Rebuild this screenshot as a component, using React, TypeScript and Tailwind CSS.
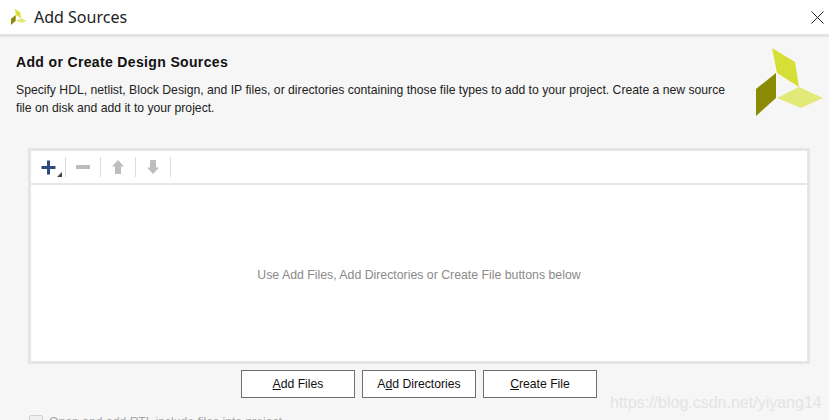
function Logo({ className }: { className: string }) {
  return (
    <svg className={className} viewBox="0 0 68 68">
      <path d="M16 0 L39 14 L43 39 L21 25 Z" fill="#d6df36" />
      <path d="M20 25 L20 50 L0 68 L0 41 Z" fill="#8a8a04" />
      <path d="M21 50 L43 39 L67 50 L45 60 Z" fill="#e3e979" />
    </svg>
  )
}

function ToolSep() {
  return <div className="h-[20px] w-px bg-[#dcdcdc]" />
}

function DialogButton({ hot, rest }: { hot: string; rest: string }) {
  return (
    <button className="h-[28px] w-[114px] border border-[#6e6e6e] bg-white text-[12.200px] text-[#111]">
      <span className="underline">{hot}</span>
      {rest}
    </button>
  )
}

export default function App() {
  return (
    <div className="relative flex h-[420px] w-[829px] flex-col overflow-hidden bg-[#f6f6f6] font-['Liberation_Sans',sans-serif]">
      {/* Title bar */}
      <div className="flex h-[37px] shrink-0 items-center border-b-[3px] border-[#e3e3e3] bg-white pr-[5px] pl-[11px]">
        <Logo className="h-[16px] w-[16px]" />
        <span className="ml-[7px] font-['Noto_Sans',sans-serif] text-[16px] text-[#222]">Add Sources</span>
        <svg className="ml-auto h-[13px] w-[13px]" viewBox="0 0 13 13">
          <path d="M0.500 0.500L12.500 12.500M12.500 0.500L0.500 12.500" stroke="#222" fill="none" />
        </svg>
      </div>

      {/* Header */}
      <div className="flex h-[111px] shrink-0 pr-[4px] pl-[16px]">
        <div className="w-[725px] pt-[16px]">
          <h1 className="text-[14px] leading-[18px] font-bold tracking-[0.35px] text-[#111]">Add or Create Design Sources</h1>
          <p className="mt-[10px] text-[12.200px] leading-[18px] text-[#222]">
            Specify HDL, netlist, Block Design, and IP files, or directories containing those file types to add to your project. Create a new source file on disk and add it to your project.
          </p>
        </div>
        <Logo className="mt-[11px] ml-[15px] h-[68px] w-[68px]" />
      </div>

      {/* Source list */}
      <div className="ml-[28px] flex h-[216px] w-[782px] shrink-0 flex-col border-[3px] border-[#e6e6e6] bg-white">
        <div className="flex h-[34px] shrink-0 items-center border-b-[2px] border-[#e6e6e6] pl-[10px]">
          <div className="relative flex h-[20px] w-[24px] items-center">
            <svg className="h-[15px] w-[15px]" viewBox="0 0 15 15">
              <path d="M6 0.500h3v5.500h5.500v3H9v5.500H6V9H0.500V6H6z" fill="#2f4a80" />
            </svg>
            <div className="absolute right-[3px] bottom-0 h-0 w-0 border-b-[5px] border-l-[5px] border-b-[#444] border-l-transparent" />
          </div>
          <ToolSep />
          <div className="flex h-[20px] w-[34px] items-center justify-center">
            <div className="h-[4px] w-[14px] bg-[#bdbdbd]" />
          </div>
          <ToolSep />
          <div className="flex h-[20px] w-[34px] items-center justify-center">
            <svg className="h-[14px] w-[12px]" viewBox="0 0 12 14">
              <path d="M6 0L12 6.500H9V14H3V6.500H0z" fill="#bdbdbd" />
            </svg>
          </div>
          <ToolSep />
          <div className="flex h-[20px] w-[34px] items-center justify-center">
            <svg className="h-[14px] w-[12px]" viewBox="0 0 12 14">
              <path d="M6 14L12 7.500H9V0H3V7.500H0z" fill="#bdbdbd" />
            </svg>
          </div>
          <ToolSep />
        </div>
        <div className="flex flex-1 items-center justify-center pt-[5px] text-[12.300px] text-[#8a8a8a]">
          Use Add Files, Add Directories or Create File buttons below
        </div>
      </div>

      {/* Buttons */}
      <div className="mt-[6px] flex h-[28px] shrink-0 pl-[241px]">
        <DialogButton hot="A" rest="dd Files" />
        <div className="w-[7px]" />
        <button className="h-[28px] w-[114px] border border-[#6e6e6e] bg-white text-[12.200px] text-[#111]">
          A<span className="underline">d</span>d Directories
        </button>
        <div className="w-[7px]" />
        <DialogButton hot="C" rest="reate File" />
      </div>

      {/* Option, cut off by the window edge */}
      <div className="mt-[17px] ml-[29px] flex shrink-0 items-start gap-[6px]">
        <div className="h-[14px] w-[14px] rounded-[2px] border border-[#d2d2d2] bg-[#efefef]" />
        <span className="text-[12.200px] leading-[14px] text-[#a8a8a8]">Open and add RTL include files into project</span>
      </div>

      {/* Watermark */}
      <span className="absolute top-[393px] left-[610px] text-[16px] leading-[20px] text-[#e4e4e4]">https://blog.csdn.net/yiyang14</span>
    </div>
  )
}
